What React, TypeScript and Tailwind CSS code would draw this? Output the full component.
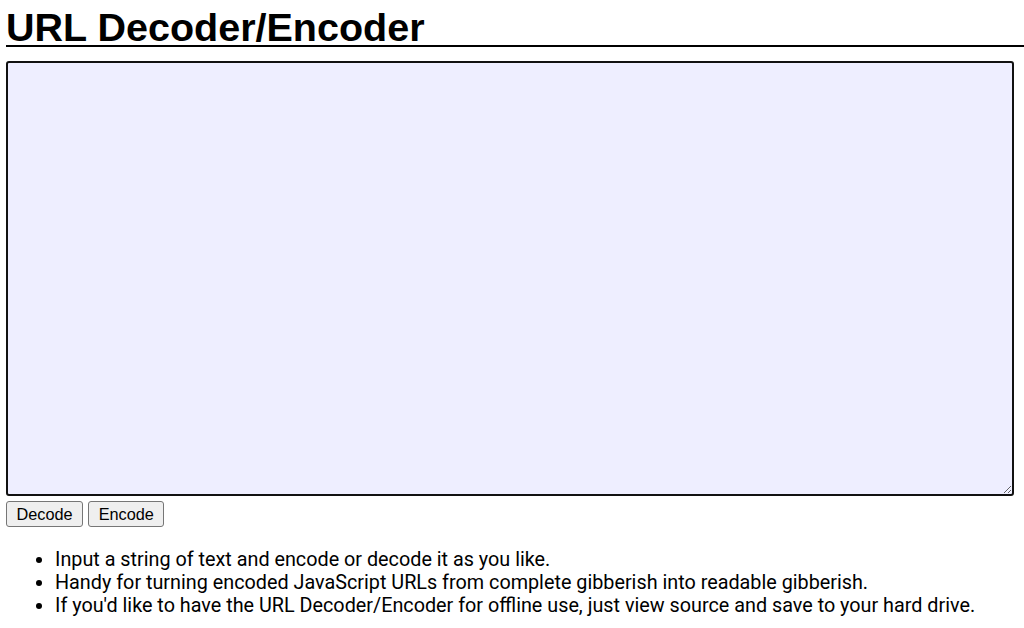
import { useState } from 'react';

const notes = [
  'Input a string of text and encode or decode it as you like.',
  'Handy for turning encoded JavaScript URLs from complete gibberish into readable gibberish.',
  "If you'd like to have the URL Decoder/Encoder for offline use, just view source and save to your hard drive.",
];

export default function App() {
  const [text, setText] = useState('');

  const decode = () => {
    try {
      setText(decodeURIComponent(text.replace(/\+/g, ' ')));
    } catch {
      // leave malformed input as it is
    }
  };

  const encode = () => setText(encodeURIComponent(text));

  return (
    <div className="min-h-screen bg-white pl-[6px] text-black font-['Liberation_Sans',Arial,sans-serif]">
      <h1 className="mt-[10px] border-b-2 border-black text-[39.5px] font-bold leading-[35px]">
        URL Decoder/Encoder
      </h1>

      <textarea
        value={text}
        onChange={(e) => setText(e.target.value)}
        className="mt-[14px] block h-[435px] w-[1008px] rounded-[3px] border-2 border-[#111] bg-[#eeeeff] p-[2px] text-[13px] font-['Liberation_Mono',monospace] outline-none"
      />

      <div className="mt-[5px] flex gap-[5px]">
        <button
          onClick={decode}
          className="h-[26px] rounded-[3px] border border-[#767676] bg-[#efefef] px-[9.5px] text-[16.3px] leading-[24px] hover:bg-[#e5e5e5]"
        >
          Decode
        </button>
        <button
          onClick={encode}
          className="h-[26px] rounded-[3px] border border-[#767676] bg-[#efefef] px-[9.5px] text-[16.3px] leading-[24px] hover:bg-[#e5e5e5]"
        >
          Encode
        </button>
      </div>

      <ul className="mt-[21px] list-disc pl-[49px] text-[19.8px] leading-[23px] font-['Roboto',sans-serif]">
        {notes.map((note, index) => (
          <li key={index}>{note}</li>
        ))}
      </ul>
    </div>
  );
}
